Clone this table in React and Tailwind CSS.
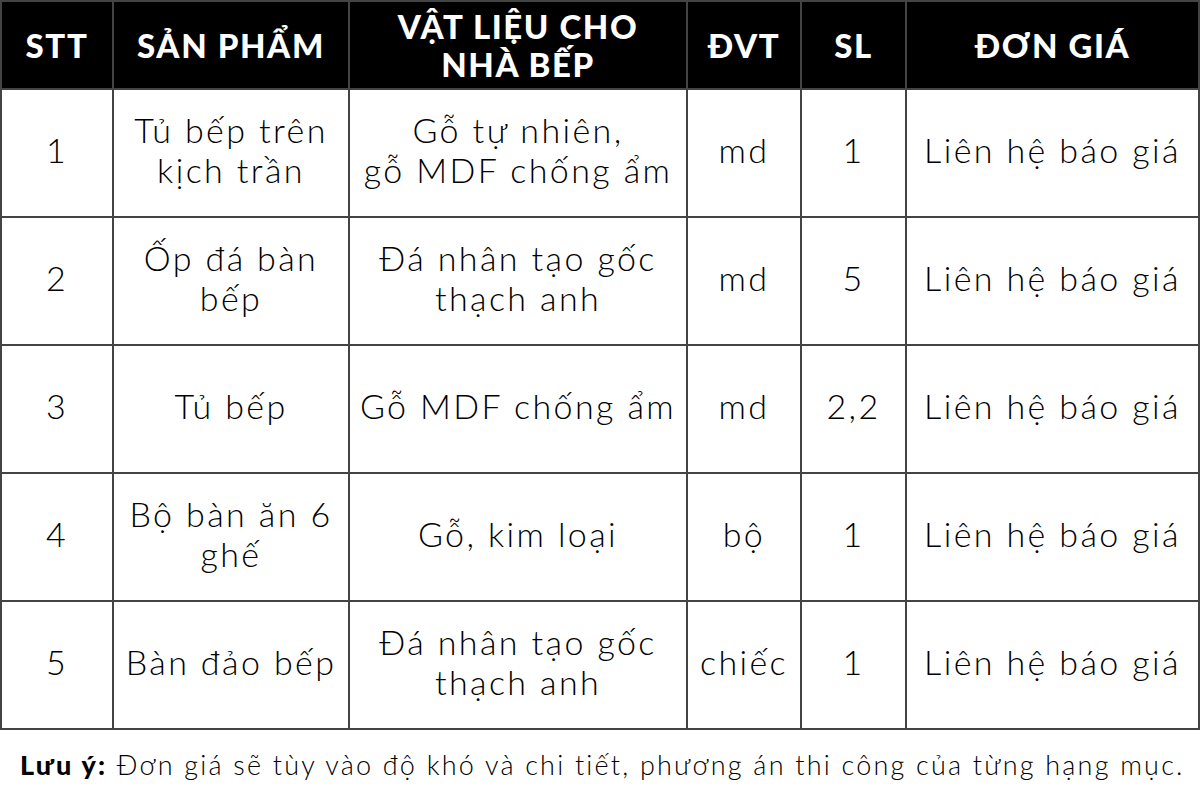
export default function App() {
  const rows = [
    ["1", ["Tủ bếp trên", "kịch trần"], ["Gỗ tự nhiên,", "gỗ MDF chống ẩm"], "md", "1"],
    ["2", ["Ốp đá bàn", "bếp"], ["Đá nhân tạo gốc", "thạch anh"], "md", "5"],
    ["3", ["Tủ bếp"], ["Gỗ MDF chống ẩm"], "md", "2,2"],
    ["4", ["Bộ bàn ăn 6", "ghế"], ["Gỗ, kim loại"], "bộ", "1"],
    ["5", ["Bàn đảo bếp"], ["Đá nhân tạo gốc", "thạch anh"], "chiếc", "1"],
  ];
  const font = { fontFamily: "Lato, 'Noto Sans', sans-serif" };
  const cell = "border-2 border-[#444] text-center align-middle text-[34px] leading-[40px] tracking-[2.4px] font-light text-black pb-[6px]";
  const head = "border-2 border-[#444] bg-black text-white text-center align-middle font-black text-[33px] leading-[38px] tracking-[1.6px] uppercase";
  return (
    <div className="w-[1200px] h-[800px] bg-white" style={font}>
      <table className="w-[1200px] border-collapse table-fixed">
        <colgroup>
          <col className="w-[112px]" />
          <col className="w-[236px]" />
          <col className="w-[338px]" />
          <col className="w-[114px]" />
          <col className="w-[105px]" />
          <col />
        </colgroup>
        <thead>
          <tr className="h-[88px]">
            <th className={head}>STT</th>
            <th className={head}>SẢN PHẨM</th>
            <th className={head + " text-[31px] tracking-[0.5px]"}>VẬT LIỆU CHO<br />NHÀ BẾP</th>
            <th className={head}>ĐVT</th>
            <th className={head}>SL</th>
            <th className={head}>ĐƠN GIÁ</th>
          </tr>
        </thead>
        <tbody>
          {rows.map((r) => (
            <tr key={r[0]} className="h-[128px]">
              <td className={cell}>{r[0]}</td>
              <td className={cell}>{r[1].map((l, i) => <div key={i}>{l}</div>)}</td>
              <td className={cell}>{r[2].map((l, i) => <div key={i}>{l}</div>)}</td>
              <td className={cell}>{r[3]}</td>
              <td className={cell}>{r[4]}</td>
              <td className={cell}>Liên hệ báo giá</td>
            </tr>
          ))}
        </tbody>
      </table>
      <div className="pl-[20px] pt-[19px] text-[27px] leading-[32px] tracking-[2.2px] font-light text-black whitespace-nowrap">
        <span className="font-black">Lưu ý:</span> Đơn giá sẽ tùy vào độ khó và chi tiết, phương án thi công của từng hạng mục.
      </div>
    </div>
  );
}
